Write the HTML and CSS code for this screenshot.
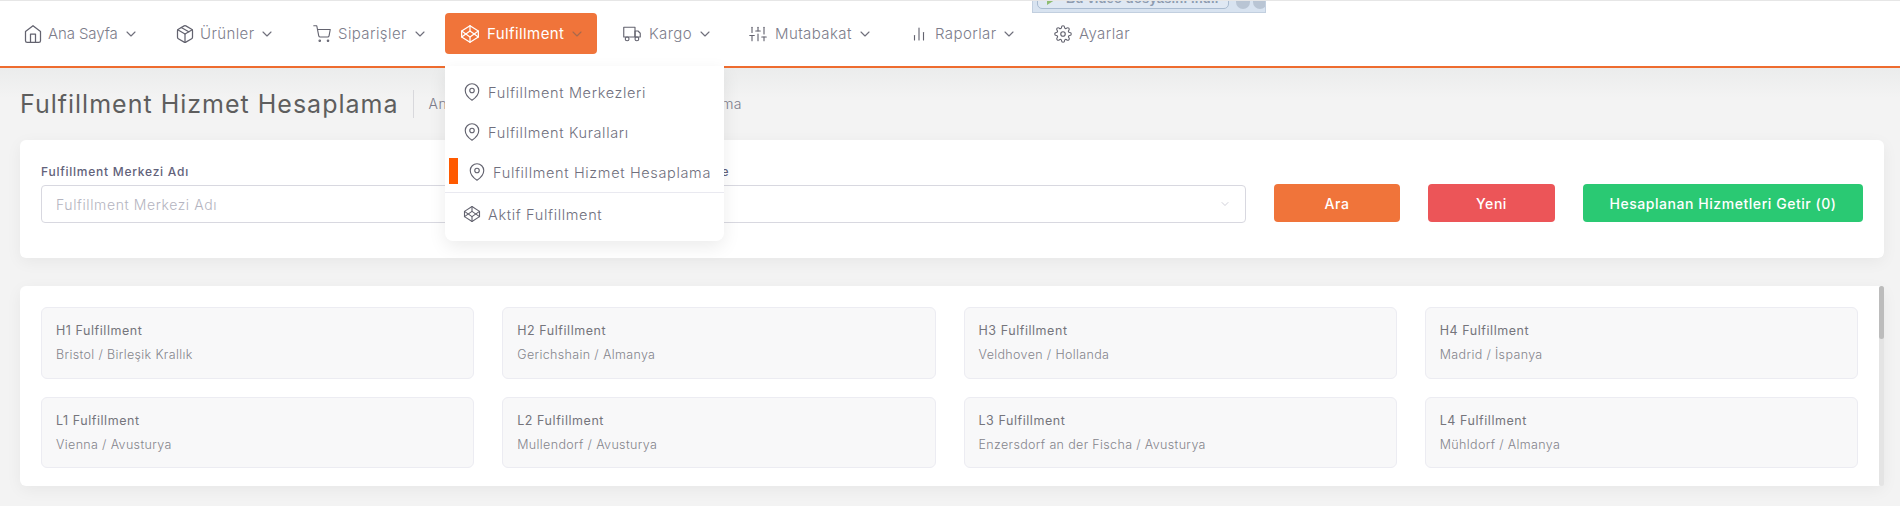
FILE: index.html
```html
<!DOCTYPE html>
<html lang="tr">
<head>
    <meta charset="UTF-8">
    <meta name="viewport" content="width=device-width, initial-scale=1.0">
    <title>Fulfillment Hizmet Hesaplama</title>
    <link rel="stylesheet" href="styles.css">
</head>
<body>
    <svg class="sprite" xmlns="http://www.w3.org/2000/svg">
        <symbol id="i-home" viewBox="0 0 24 24"><path d="M3 9l9-7 9 7v11a2 2 0 0 1-2 2H5a2 2 0 0 1-2-2z"/><polyline points="9 22 9 12 15 12 15 22"/></symbol>
        <symbol id="i-box" viewBox="0 0 24 24"><line x1="16.5" y1="9.4" x2="7.5" y2="4.21"/><path d="M21 16V8a2 2 0 0 0-1-1.73l-7-4a2 2 0 0 0-2 0l-7 4A2 2 0 0 0 3 8v8a2 2 0 0 0 1 1.73l7 4a2 2 0 0 0 2 0l7-4A2 2 0 0 0 21 16z"/><polyline points="3.27 6.96 12 12.01 20.73 6.96"/><line x1="12" y1="22.08" x2="12" y2="12"/></symbol>
        <symbol id="i-cart" viewBox="0 0 24 24"><circle cx="9" cy="21" r="1"/><circle cx="20" cy="21" r="1"/><path d="M1 1h4l2.68 13.39a2 2 0 0 0 2 1.61h9.72a2 2 0 0 0 2-1.61L23 6H6"/></symbol>
        <symbol id="i-codepen" viewBox="0 0 24 24"><polygon points="12 2 22 8.5 22 15.5 12 22 2 15.5 2 8.5 12 2"/><line x1="12" y1="22" x2="12" y2="15.5"/><polyline points="22 8.5 12 15.5 2 8.5"/><polyline points="2 15.5 12 8.5 22 15.5"/><line x1="12" y1="2" x2="12" y2="8.5"/></symbol>
        <symbol id="i-truck" viewBox="0 0 24 24"><rect x="1" y="3" width="15" height="13"/><polygon points="16 8 20 8 23 11 23 16 16 16 16 8"/><circle cx="5.5" cy="18.5" r="2.5"/><circle cx="18.5" cy="18.5" r="2.5"/></symbol>
        <symbol id="i-sliders" viewBox="0 0 24 24"><line x1="4" y1="21" x2="4" y2="14"/><line x1="4" y1="10" x2="4" y2="3"/><line x1="12" y1="21" x2="12" y2="12"/><line x1="12" y1="8" x2="12" y2="3"/><line x1="20" y1="21" x2="20" y2="16"/><line x1="20" y1="12" x2="20" y2="3"/><line x1="1" y1="14" x2="7" y2="14"/><line x1="9" y1="8" x2="15" y2="8"/><line x1="17" y1="16" x2="23" y2="16"/></symbol>
        <symbol id="i-chart" viewBox="0 0 24 24"><line x1="18" y1="20" x2="18" y2="10"/><line x1="12" y1="20" x2="12" y2="4"/><line x1="6" y1="20" x2="6" y2="14"/></symbol>
        <symbol id="i-gear" viewBox="0 0 24 24"><circle cx="12" cy="12" r="3"/><path d="M19.4 15a1.65 1.65 0 0 0 .33 1.82l.06.06a2 2 0 0 1 0 2.83 2 2 0 0 1-2.83 0l-.06-.06a1.65 1.65 0 0 0-1.82-.33 1.65 1.65 0 0 0-1 1.51V21a2 2 0 0 1-2 2 2 2 0 0 1-2-2v-.09A1.65 1.65 0 0 0 9 19.4a1.65 1.65 0 0 0-1.82.33l-.06.06a2 2 0 0 1-2.83 0 2 2 0 0 1 0-2.83l.06-.06a1.65 1.65 0 0 0 .33-1.82 1.65 1.65 0 0 0-1.51-1H3a2 2 0 0 1-2-2 2 2 0 0 1 2-2h.09A1.65 1.65 0 0 0 4.6 9a1.65 1.65 0 0 0-.33-1.82l-.06-.06a2 2 0 0 1 0-2.83 2 2 0 0 1 2.83 0l.06.06a1.65 1.65 0 0 0 1.82.33H9a1.65 1.65 0 0 0 1-1.51V3a2 2 0 0 1 2-2 2 2 0 0 1 2 2v.09a1.65 1.65 0 0 0 1 1.51 1.65 1.65 0 0 0 1.82-.33l.06-.06a2 2 0 0 1 2.83 0 2 2 0 0 1 0 2.83l-.06.06a1.65 1.65 0 0 0-.33 1.82V9a1.65 1.65 0 0 0 1.51 1H21a2 2 0 0 1 2 2 2 2 0 0 1-2 2h-.09a1.65 1.65 0 0 0-1.51 1z"/></symbol>
        <symbol id="i-pin" viewBox="0 0 24 24"><path d="M21 10c0 7-9 13-9 13s-9-6-9-13a9 9 0 0 1 18 0z"/><circle cx="12" cy="10" r="3"/></symbol>
        <symbol id="i-down" viewBox="0 0 24 24"><polyline points="6 9 12 15 18 9"/></symbol>
    </svg>

    <header class="topbar">
        <nav class="nav">
            <a class="nav-item nav-home"><svg class="icon"><use href="#i-home"/></svg><span>Ana Sayfa</span><svg class="chev"><use href="#i-down"/></svg></a>
            <a class="nav-item nav-products"><svg class="icon"><use href="#i-box"/></svg><span>Ürünler</span><svg class="chev"><use href="#i-down"/></svg></a>
            <a class="nav-item nav-orders"><svg class="icon"><use href="#i-cart"/></svg><span>Siparişler</span><svg class="chev"><use href="#i-down"/></svg></a>
            <div class="nav-group">
                <a class="nav-item active"><svg class="icon"><use href="#i-codepen"/></svg><span>Fulfillment</span><svg class="chev"><use href="#i-down"/></svg></a>
                <div class="dropdown">
                    <a class="drop-item"><svg class="icon"><use href="#i-pin"/></svg>Fulfillment Merkezleri</a>
                    <a class="drop-item"><svg class="icon"><use href="#i-pin"/></svg>Fulfillment Kuralları</a>
                    <a class="drop-item current"><i class="marker"></i><svg class="icon"><use href="#i-pin"/></svg>Fulfillment Hizmet Hesaplama</a>
                    <a class="drop-item last"><svg class="icon"><use href="#i-codepen"/></svg>Aktif Fulfillment</a>
                </div>
            </div>
            <a class="nav-item nav-cargo"><svg class="icon"><use href="#i-truck"/></svg><span>Kargo</span><svg class="chev"><use href="#i-down"/></svg></a>
            <a class="nav-item nav-recon"><svg class="icon"><use href="#i-sliders"/></svg><span>Mutabakat</span><svg class="chev"><use href="#i-down"/></svg></a>
            <a class="nav-item nav-reports"><svg class="icon"><use href="#i-chart"/></svg><span>Raporlar</span><svg class="chev"><use href="#i-down"/></svg></a>
            <a class="nav-item nav-settings"><svg class="icon"><use href="#i-gear"/></svg><span>Ayarlar</span></a>
        </nav>
        <div class="video-bar">
            <div class="video-btn"><i class="play"></i>Bu video dosyasını indir</div>
            <i class="video-dot"></i>
            <i class="video-dot"></i>
        </div>
    </header>

    <main class="content">
        <div class="page-head">
            <h1>Fulfillment Hizmet Hesaplama</h1>
            <p class="crumbs">Ana Sayfa <span class="crumb-sep">/</span> Fulfillment Hizmet Hesaplama</p>
        </div>

        <section class="panel filter">
            <div class="field">
                <label>Fulfillment Merkezi Adı</label>
                <div class="input placeholder">Fulfillment Merkezi Adı</div>
            </div>
            <div class="field">
                <label>Şehre Göre</label>
                <div class="input select"><svg class="chev"><use href="#i-down"/></svg></div>
            </div>
            <button class="btn btn-orange">Ara</button>
            <button class="btn btn-red">Yeni</button>
            <button class="btn btn-green">Hesaplanan Hizmetleri Getir (0)</button>
        </section>

        <section class="panel centers">
            <div class="center"><b>H1 Fulfillment</b><span>Bristol / Birleşik Krallık</span></div>
            <div class="center"><b>H2 Fulfillment</b><span>Gerichshain / Almanya</span></div>
            <div class="center"><b>H3 Fulfillment</b><span>Veldhoven / Hollanda</span></div>
            <div class="center"><b>H4 Fulfillment</b><span>Madrid / İspanya</span></div>
            <div class="center"><b>L1 Fulfillment</b><span>Vienna / Avusturya</span></div>
            <div class="center"><b>L2 Fulfillment</b><span>Mullendorf / Avusturya</span></div>
            <div class="center"><b>L3 Fulfillment</b><span>Enzersdorf an der Fischa / Avusturya</span></div>
            <div class="center"><b>L4 Fulfillment</b><span>Mühldorf / Almanya</span></div>
            <div class="scrollbar"><div class="thumb"></div></div>
        </section>
    </main>
</body>
</html>
```

FILE: styles.css
```css
* {
    box-sizing: border-box;
}
html, body {
    height: 506px;
    overflow: hidden;
}
body {
    margin: 0;
    font-family: Inter, "Noto Sans", sans-serif;
    color: #7d7d8b;
    background-color: #f3f3f3;
    border-top: 1px solid #e6e6e6;
}
.sprite {
    display: none;
}
.icon, .chev {
    fill: none;
    stroke: currentColor;
    stroke-linecap: round;
    stroke-linejoin: round;
    flex: none;
}
.icon {
    width: 18px;
    height: 18px;
    stroke-width: 1.5;
    color: #63636f;
}
.chev {
    width: 16px;
    height: 16px;
    stroke-width: 1.7;
    color: #6f6f7b;
}

/* ust menu */
.topbar {
    position: relative;
    height: 67px;
    background-color: #fff;
    border-bottom: 2px solid #ee6c2f;
    padding-top: 12px;
}
.nav {
    display: flex;
    align-items: flex-start;
    padding-left: 8px;
}
.nav-item {
    display: flex;
    align-items: center;
    height: 41px;
    padding-left: 15px;
    font-size: 15px;
    font-weight: 300;
    letter-spacing: 0.4px;
    border-radius: 4px;
}
.nav-item span {
    margin: 0 5px 0 7px;
}
.nav-home { width: 152px; letter-spacing: -0.1px; }
.nav-products { width: 138px; }
.nav-orders { width: 147px; }
.nav-cargo { width: 126px; }
.nav-recon { width: 161px; }
.nav-reports { width: 144px; }
.nav-home .icon, .nav-products .icon {
    width: 20px;
    height: 20px;
}
.nav-home span, .nav-products span {
    margin-left: 5px;
}
.nav-cargo span, .nav-recon span {
    margin-left: 8px;
}
.nav-item.active {
    width: 152px;
    color: #fff;
    font-weight: 400;
    background-color: #f0743a;
}
.nav-item.active .icon {
    width: 20px;
    height: 20px;
    color: #fff;
}
.nav-item.active .chev {
    color: #a8694d;
}
.nav-group {
    position: relative;
    margin-right: 11px;
}
.dropdown {
    position: absolute;
    z-index: 5;
    top: 53px;
    left: 0;
    width: 279px;
    height: 175px;
    padding-top: 6px;
    background-color: #fff;
    border-radius: 0 0 8px 8px;
    box-shadow: 0 6px 18px rgba(0, 0, 0, 0.08);
}
.drop-item {
    display: flex;
    align-items: center;
    gap: 7px;
    height: 40px;
    padding-left: 19px;
    font-size: 14.5px;
    font-weight: 300;
    letter-spacing: 0.65px;
    color: #6f6f7d;
}
.drop-item .icon {
    margin-left: -1px;
}
.drop-item.current {
    height: 41px;
    padding-left: 24px;
    border-bottom: 1px solid #e9e9f0;
    position: relative;
}
.marker {
    position: absolute;
    left: 4px;
    top: 6px;
    width: 9px;
    height: 26px;
    background-color: #ff5a00;
}
.drop-item.last {
    height: 42px;
}

/* pdf eklentisi cubugu */
.video-bar {
    position: absolute;
    top: -1px;
    left: 1032px;
    width: 234px;
    height: 13px;
    display: flex;
    align-items: flex-end;
    gap: 3px;
    padding: 0 2px 3px 4px;
    overflow: hidden;
    background-color: #d8e3f0;
    border: 1px solid #c2cfdf;
    border-top: 0;
}
.video-btn {
    position: relative;
    width: 192px;
    height: 24px;
    flex: none;
    padding: 5px 0 0 28px;
    margin-right: 4px;
    font-family: "Liberation Sans", sans-serif;
    font-size: 13px;
    font-weight: bold;
    letter-spacing: 0.15px;
    color: #8e9cb0;
    white-space: nowrap;
    background-color: #dfe8f3;
    border: 1px solid #a9bbd0;
    border-radius: 0 0 5px 5px;
}
.play {
    position: absolute;
    left: 9px;
    top: 1px;
    border-left: 14px solid #8fbd72;
    border-top: 9px solid transparent;
    border-bottom: 9px solid transparent;
}
.video-dot {
    width: 14px;
    height: 14px;
    flex: none;
    background-color: #b9c5d4;
    border-radius: 50%;
}

.content {
    padding: 0 16px 0 20px;
    background: linear-gradient(#ebecec, #f3f3f3 30px);
}
.page-head {
    display: flex;
    align-items: center;
    height: 72px;
}
h1 {
    margin: 0;
    padding-right: 15px;
    font-size: 25px;
    font-weight: 400;
    letter-spacing: 1px;
    color: #5e5e5e;
}
.crumbs {
    margin: 0;
    height: 28px;
    padding-left: 14px;
    line-height: 28px;
    font-size: 14px;
    font-weight: 300;
    letter-spacing: 0.5px;
    white-space: nowrap;
    border-left: 1px solid #d8d8dc;
}
.crumb-sep {
    margin: 0 11px;
}
.panel {
    background-color: #fff;
    border-radius: 6px;
    box-shadow: 0 4px 16px rgba(0, 0, 0, 0.05);
}

/* filtre */
.filter {
    display: flex;
    align-items: flex-end;
    gap: 28px;
    height: 118px;
    margin-bottom: 28px;
    padding: 0 21px 36px;
}
.field {
    flex: 1;
    margin-bottom: -1px;
}
.field label {
    display: block;
    margin-bottom: 5px;
    font-size: 12px;
    line-height: 16px;
    font-weight: 500;
    letter-spacing: 0.75px;
    color: #62627a;
}
.input {
    display: flex;
    align-items: center;
    height: 38px;
    padding: 0 14px;
    font-size: 14px;
    font-weight: 300;
    letter-spacing: 0.6px;
    border: 1px solid #d8d8e0;
    border-radius: 4px;
}
.placeholder {
    color: #b4b4c0;
}
.select {
    justify-content: flex-end;
}
.select .chev {
    width: 12px;
    height: 12px;
    color: #c8c8d2;
}
.btn {
    height: 38px;
    padding: 0;
    font-family: inherit;
    font-size: 14px;
    font-weight: 500;
    letter-spacing: 0.55px;
    color: #fff;
    border: 0;
    border-radius: 4px;
    flex: none;
}
.btn-orange {
    width: 126px;
    background-color: #f0743a;
}
.btn-red {
    width: 127px;
    background-color: #ec5558;
}
.btn-green {
    width: 280px;
    background-color: #2ac973;
}

/* merkez kartlari */
.centers {
    position: relative;
    display: grid;
    grid-template-columns: repeat(4, 1fr);
    grid-template-rows: 72px 71px;
    gap: 18px 28px;
    height: 200px;
    padding: 21px 26px 18px 21px;
}
.center {
    display: flex;
    flex-direction: column;
    justify-content: center;
    gap: 8px;
    padding: 0 14px;
    background-color: #f8f8f9;
    border: 1px solid #ececf2;
    border-radius: 6px;
    font-size: 12.5px;
    line-height: 16px;
    color: #85858c;
}
.center b {
    font-weight: 400;
    letter-spacing: 0.55px;
    color: #75757c;
}
.center span {
    font-weight: 300;
    letter-spacing: 0.35px;
}
.scrollbar {
    position: absolute;
    top: 0;
    right: 0;
    bottom: 0;
    width: 5px;
    background-color: #e4e4e4;
    border-radius: 3px;
}
.thumb {
    height: 53px;
    background-color: #bcbcbc;
    border-radius: 3px;
}
```
